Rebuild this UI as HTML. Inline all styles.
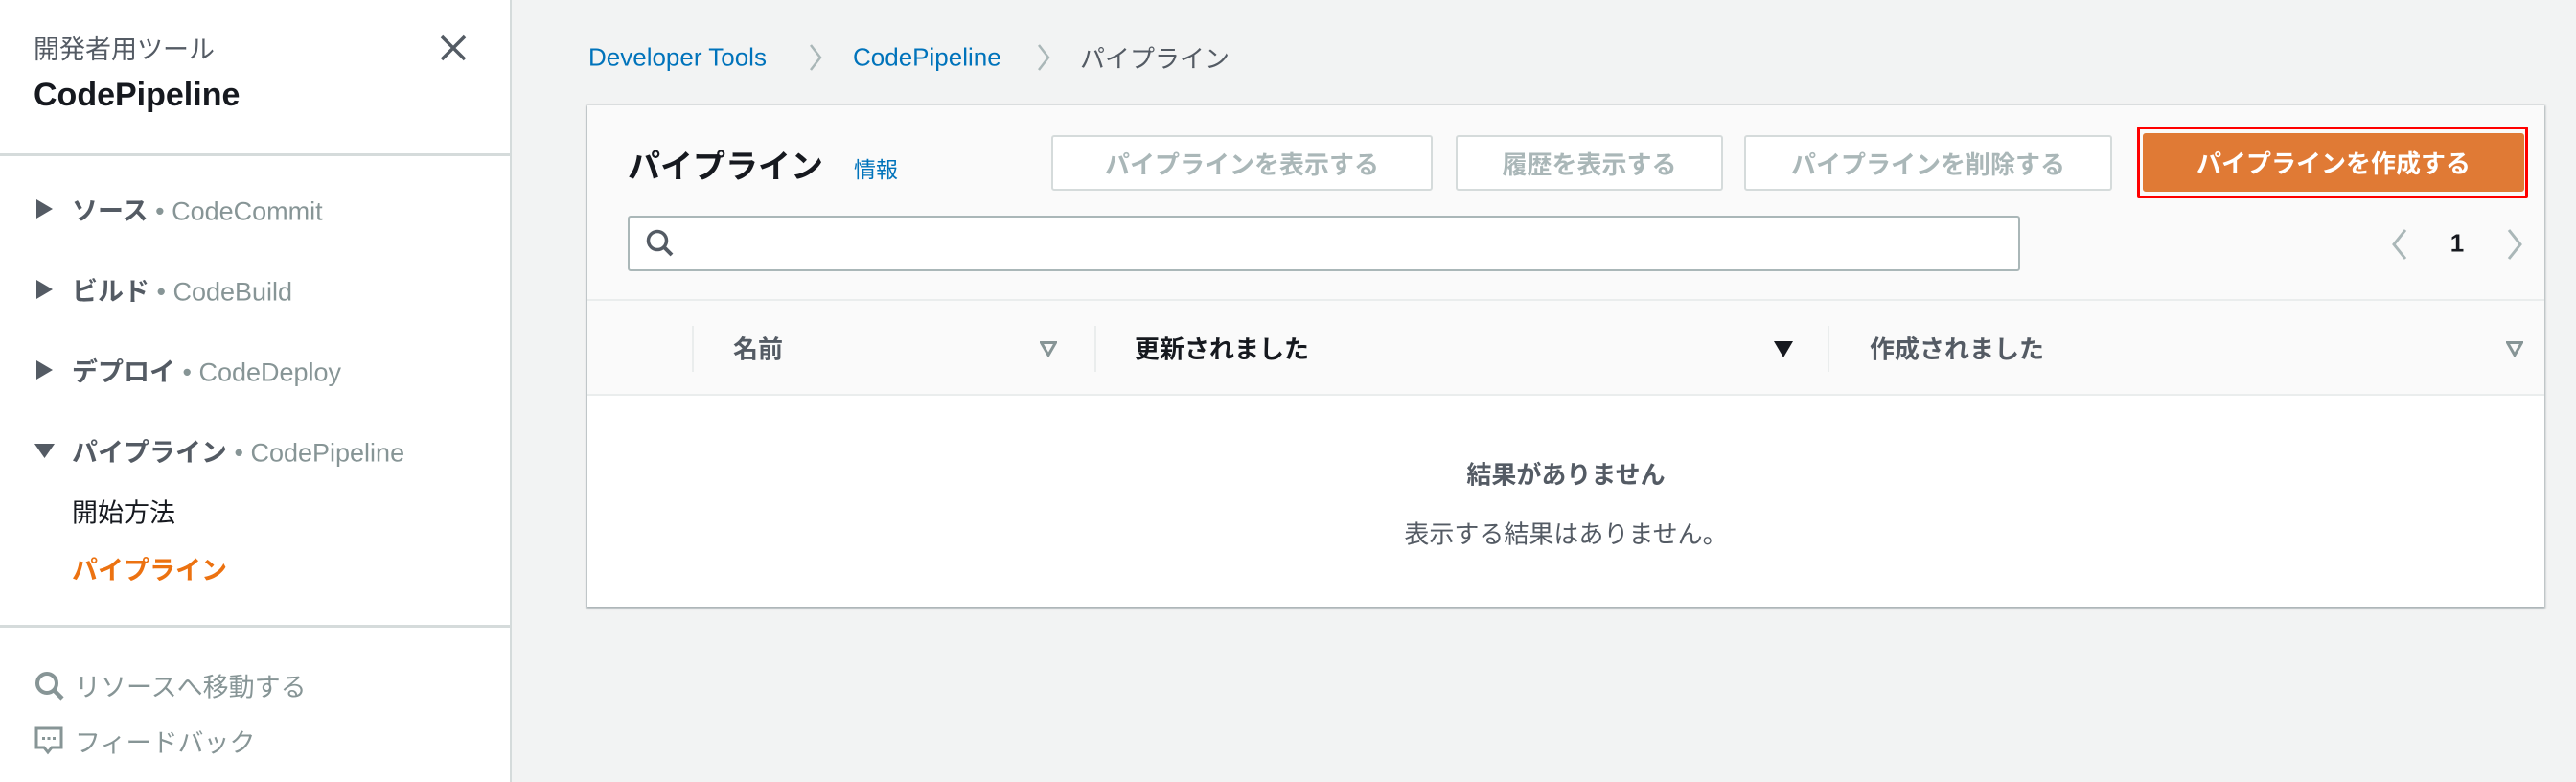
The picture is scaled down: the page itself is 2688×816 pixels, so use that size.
<!DOCTYPE html>
<html><head><meta charset="utf-8"><style>
*{margin:0;padding:0;box-sizing:border-box}
body{width:2688px;height:816px;overflow:hidden;background:#f2f3f3;font-family:"Liberation Sans","Noto Sans CJK JP",sans-serif;color:#16191f;position:relative}
.a{position:absolute;white-space:nowrap}
.side{position:absolute;left:0;top:0;width:534px;height:816px;background:#fff;border-right:2px solid #d5dbdb}
.hr{position:absolute;left:0;width:534px;height:3px;background:#d5dbdb}
.it{font-size:27px;font-weight:bold;color:#545b64;transform:translateY(-50%)}
.it span{font-weight:normal;color:#879596}
.tri{position:absolute;width:0;height:0}
.btn{position:absolute;top:141px;height:58px;border:2px solid #d5dbdb;border-radius:3px;background:#fff;color:#aab7b8;font-weight:bold;font-size:26px;display:flex;align-items:center;justify-content:center}
.th{font-size:26px;font-weight:bold;transform:translateY(-50%)}
.vd{position:absolute;top:340px;width:2px;height:48px;background:#eaeded}
</style></head><body>
<div class="side">
  <div class="a" style="left:35px;top:30px;font-size:27px;color:#545b64">開発者用ツール</div>
  <div class="a" style="left:35px;top:80px;font-size:34px;font-weight:bold">CodePipeline</div>
  <svg class="a" style="left:458px;top:35px" width="30" height="30" viewBox="0 0 30 30"><path d="M3 3L27 27M27 3L3 27" stroke="#545b64" stroke-width="3.5"/></svg>
  <div class="hr" style="top:160px"></div>
  <svg class="a" style="left:38px;top:208px" width="18" height="20"><path d="M0 0L17 10L0 20Z" fill="#545b64"/></svg>
  <div class="a it" style="left:75px;top:218px">ソース <span>• CodeCommit</span></div>
  <svg class="a" style="left:38px;top:292px" width="18" height="20"><path d="M0 0L17 10L0 20Z" fill="#545b64"/></svg>
  <div class="a it" style="left:75px;top:302px">ビルド <span>• CodeBuild</span></div>
  <svg class="a" style="left:38px;top:376px" width="18" height="20"><path d="M0 0L17 10L0 20Z" fill="#545b64"/></svg>
  <div class="a it" style="left:75px;top:386px">デプロイ <span>• CodeDeploy</span></div>
  <svg class="a" style="left:36px;top:463px" width="22" height="16"><path d="M0 0L21 0L10.5 15Z" fill="#545b64"/></svg>
  <div class="a it" style="left:75px;top:470px">パイプライン <span>• CodePipeline</span></div>
  <div class="a" style="left:75px;top:533px;transform:translateY(-50%);font-size:27px;color:#16191f">開始方法</div>
  <div class="a" style="left:75px;top:593px;transform:translateY(-50%);font-size:27px;font-weight:bold;color:#ec7211">パイプライン</div>
  <div class="hr" style="top:652px"></div>
  <svg class="a" style="left:36px;top:700px" width="32" height="32" viewBox="0 0 32 32"><circle cx="13" cy="13" r="10" fill="none" stroke="#879596" stroke-width="4"/><path d="M20 20L29 29" stroke="#879596" stroke-width="4.5"/></svg>
  <div class="a" style="left:78px;top:715px;transform:translateY(-50%);font-size:27px;color:#879596">リソースへ移動する</div>
  <svg class="a" style="left:36px;top:758px" width="30" height="30" viewBox="0 0 30 30"><path d="M2 2H28V22H18L14 27L10 22H2Z" fill="none" stroke="#879596" stroke-width="3"/><rect x="8" y="11" width="3" height="3" fill="#879596"/><rect x="13.5" y="11" width="3" height="3" fill="#879596"/><rect x="19" y="11" width="3" height="3" fill="#879596"/></svg>
  <div class="a" style="left:78px;top:773px;transform:translateY(-50%);font-size:27px;color:#879596">フィードバック</div>
</div>

<div class="a" style="left:614px;top:60px;transform:translateY(-50%);font-size:26px;color:#0073bb">Developer Tools</div>
<svg class="a" style="left:843px;top:45px" width="16" height="30"><path d="M3 2L13 15L3 28" fill="none" stroke="#aab7b8" stroke-width="2.5"/></svg>
<div class="a" style="left:890px;top:60px;transform:translateY(-50%);font-size:26px;color:#0073bb">CodePipeline</div>
<div class="a" style="left:1080px;top:60px;transform:translateY(-50%);font-size:26px;color:#545b64"></div>
<svg class="a" style="left:1081px;top:45px" width="16" height="30"><path d="M3 2L13 15L3 28" fill="none" stroke="#aab7b8" stroke-width="2.5"/></svg>
<div class="a" style="left:1127px;top:60px;transform:translateY(-50%);font-size:26px;color:#545b64">パイプライン</div>

<div class="a" style="left:613px;top:110px;width:2042px;height:523px;background:#fff;box-shadow:0 1px 2px 1px rgba(0,28,36,.3)">
  <div class="a" style="left:0;top:0;width:2042px;height:204px;background:#fafafa;border-bottom:2px solid #eaeded"></div>
  <div class="a" style="left:0;top:204px;width:2042px;height:99px;background:#fafafa;border-bottom:2px solid #eaeded"></div>
</div>
<div class="a" style="left:655px;top:171px;transform:translateY(-50%);font-size:34px;font-weight:bold">パイプライン</div>
<div class="a" style="left:891px;top:175px;transform:translateY(-50%);font-size:23px;color:#0073bb">情報</div>
<div class="btn" style="left:1097px;width:398px">パイプラインを表示する</div>
<div class="btn" style="left:1519px;width:279px">履歴を表示する</div>
<div class="btn" style="left:1820px;width:384px">パイプラインを削除する</div>
<div class="a" style="left:2230px;top:132px;width:408px;height:75px;border:3px solid #f00;border-radius:2px"></div>
<div class="btn" style="left:2236px;top:139px;width:398px;height:61px;background:#e07a35;border:2px solid #e07a35;color:#fff">パイプラインを作成する</div>
<div class="a" style="left:655px;top:225px;width:1453px;height:58px;background:#fff;border:2px solid #aab7b8;border-radius:3px"></div>
<svg class="a" style="left:673px;top:238px" width="32" height="32" viewBox="0 0 32 32"><circle cx="13" cy="13" r="9.5" fill="none" stroke="#545b64" stroke-width="3.5"/><path d="M20 20L28 28" stroke="#545b64" stroke-width="4"/></svg>
<svg class="a" style="left:2494px;top:238px" width="20" height="34"><path d="M16 2L4 17L16 32" fill="none" stroke="#aab7b8" stroke-width="3"/></svg>
<div class="a" style="left:2564px;top:254px;transform:translate(-50%,-50%);font-size:26px;font-weight:bold">1</div>
<svg class="a" style="left:2614px;top:238px" width="20" height="34"><path d="M4 2L16 17L4 32" fill="none" stroke="#aab7b8" stroke-width="3"/></svg>

<div class="vd" style="left:722px"></div>
<div class="vd" style="left:1142px"></div>
<div class="vd" style="left:1907px"></div>
<div class="a th" style="left:765px;top:363px;color:#545b64">名前</div>
<svg class="a" style="left:1085px;top:356px" width="18" height="16"><path d="M1.5 1.5H16.5L9 14.5Z" fill="none" stroke="#879596" stroke-width="3"/></svg>
<div class="a th" style="left:1184px;top:363px">更新されました</div>
<svg class="a" style="left:1851px;top:356px" width="20" height="17"><path d="M0 0H20L10 17Z" fill="#16191f"/></svg>
<div class="a th" style="left:1951px;top:363px;color:#545b64">作成されました</div>
<svg class="a" style="left:2615px;top:356px" width="18" height="16"><path d="M1.5 1.5H16.5L9 14.5Z" fill="none" stroke="#879596" stroke-width="3"/></svg>

<div class="a" style="left:1634px;top:494px;transform:translate(-50%,-50%);font-size:26px;font-weight:bold;color:#545b64">結果がありません</div>
<div class="a" style="left:1634px;top:556px;transform:translate(-50%,-50%);font-size:26px;color:#545b64">表示する結果はありません。</div>
</body></html>
